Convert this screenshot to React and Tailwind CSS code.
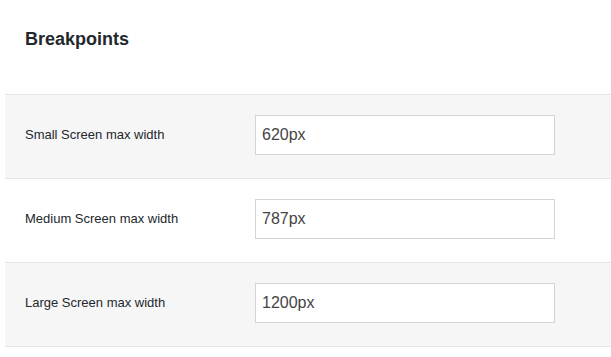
import React from "react";

const breakpoints = [
  { label: "Small Screen max width", value: "620px", shaded: true },
  { label: "Medium Screen max width", value: "787px", shaded: false },
  { label: "Large Screen max width", value: "1200px", shaded: true },
];

const BreakpointRow = ({ label, value, shaded }) => (
  <div
    className={`flex h-[84px] items-start border-b border-[#e5e5e5] pt-5 pl-5 ${
      shaded ? "bg-[#f6f6f6]" : "bg-white"
    }`}
  >
    <div className="flex h-10 w-[230px] items-center text-[13px] text-[#23282d]">
      {label}
    </div>
    <input
      type="text"
      defaultValue={value}
      className="h-10 w-[300px] border border-[#d4d4d4] bg-white px-[6px] text-[16px] text-[#444] outline-none"
    />
  </div>
);

export default function App() {
  return (
    <div
      className="min-h-[357px] w-[611px] bg-white"
      style={{ fontFamily: '"Liberation Sans", Arial, sans-serif' }}
    >
      <div className="h-[94px] pl-[25px] pt-[28px]">
        <h2 className="text-[18px] font-bold leading-[22px] text-[#23282d]">
          Breakpoints
        </h2>
      </div>
      <div className="ml-[5px] border-t border-[#e5e5e5]">
        {breakpoints.map((bp) => (
          <BreakpointRow key={bp.label} {...bp} />
        ))}
      </div>
    </div>
  );
}
